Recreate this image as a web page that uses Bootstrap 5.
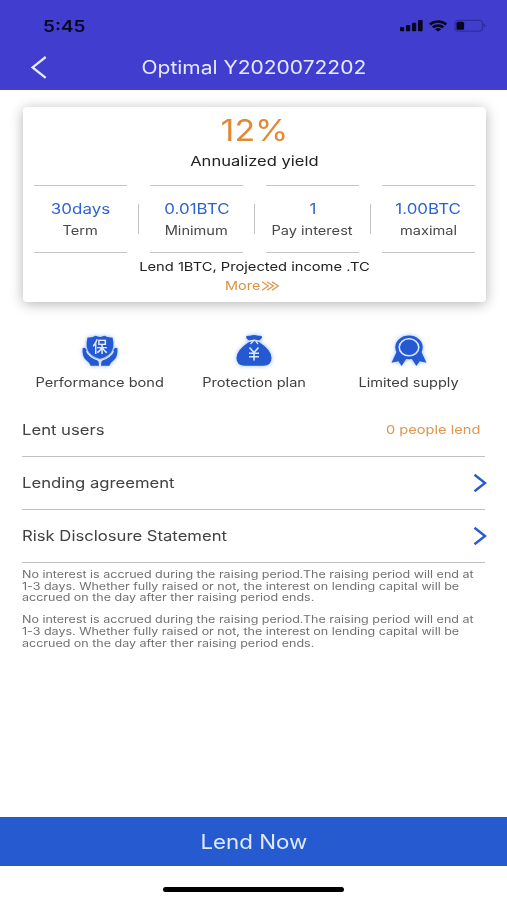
<!DOCTYPE html>
<html lang="en">
<head>
<meta charset="utf-8">
<meta name="viewport" content="width=device-width, initial-scale=1">
<title>Optimal Y2020072202</title>
<link href="https://cdn.jsdelivr.net/npm/bootstrap@5.3.0/dist/css/bootstrap.min.css" rel="stylesheet">
<style>
  body { font-family: Inter, "Noto Sans", sans-serif; color: #424242; background: #fff; }
  .screen { height: 900px; overflow: hidden; }
  .top-area { background: #403dcf; height: 89.5px; }
  .status-row { height: 45px; padding: 7px 21px 0 43px; color: #07071f; }
  .title-row { height: 44.5px; color: #e6e9ff; padding: 0 30px; }
  .title-row .side { width: 20px; }

  /* extended letterforms: each text block widens from its own anchor */
  .wide { display: inline-block; white-space: nowrap; transform: scaleX(var(--sx, 1.18)); transform-origin: 50% 50%; }
  .wide-start { transform-origin: 0 50%; }
  .wide-end { transform-origin: 100% 50%; }

  .t-clock { font-size: 15.5px; font-weight: 600; --sx: 1.22; padding-top: 1px; }
  .t-title { font-size: 18.3px; --sx: 1.148; }
  .t-rate { font-size: 29.5px; --sx: 1.15; color: #e08a35; }
  .t-yield { font-size: 13.5px; --sx: 1.225; color: #222; }
  .t-value { font-size: 14px; --sx: 1.21; color: #2d62d2; }
  .t-label { font-size: 12.6px; --sx: 1.16; color: #484848; }
  .t-note { font-size: 12.3px; --sx: 1.195; color: #222; }
  .t-more { font-size: 12px; --sx: 1.2; color: #e0903f; }
  .t-feature { font-size: 12.4px; --sx: 1.175; color: #404040; }
  .t-row { font-size: 14.3px; --sx: 1.165; color: #424242; }
  .t-count { font-size: 12px; --sx: 1.22; color: #e0964c; }
  .t-fine { font-size: 10.4px; --sx: 1.203; color: #707070; line-height: 11.9px; }
  .t-cta { font-size: 20px; --sx: 1.115; color: #dfeaff; padding-top: 2px; }

  .offer { margin: 17.5px 21px 0 22.5px; height: 194.5px; border-radius: 4px; box-shadow: 0 2px 13px rgba(0,0,0,.3); }
  .rate-line { height: 45px; line-height: 46px; }
  .yield-line { height: 18px; line-height: 17px; }
  .stats { margin-top: 15px; padding-left: 11.5px; height: 67.5px; }
  .stat { width: 93px; border-top: 1px solid #c4c4c4; border-bottom: 1px solid #c4c4c4; padding-top: 13px; }
  .stat-value { height: 18px; line-height: 18px; }
  .stat-label { height: 20px; line-height: 20px; margin-top: 2px; }
  .stat-rule { width: 1px; height: 30px; margin: 0 11px; background: #c4c4c4; }
  .note-line { height: 20px; line-height: 20px; margin-top: 2.5px; }
  .more-line { height: 18px; margin-top: 1.5px; }

  .features { margin: 30px 21px 0 22.5px; height: 76px; }
  .features svg { display: block; height: 38px; filter: drop-shadow(0 0 2px rgba(60,125,255,.55)); }
  .feature-name { height: 20px; line-height: 20px; margin-top: 1px; }

  .options { margin: 0 22.5px 0 21.5px; }
  .option { height: 53.3px; border-bottom: 1px solid #c0c0c0; padding-left: .5px; }
  .option:first-child { height: 49px; padding-right: 4px; padding-bottom: 3px; }
  .option svg { margin-right: -2px; }
  .fine-print { padding: 5.5px 0 0 22px; }
  .fine-print p { margin: 0 0 9.4px; }

  .cta { height: 49.5px; background: #265ad0; border: 0; border-radius: 0; margin-top: auto; }
  .home-area { height: 34px; padding-top: 21px; }
  .home-bar { width: 181px; height: 5px; border-radius: 3px; background: #000; }
</style>
</head>
<body>
<div class="screen d-flex flex-column">
  <header class="top-area">
    <div class="status-row d-flex align-items-center justify-content-between">
      <span class="wide wide-start t-clock">5:45</span>
      <svg width="88" height="14" viewBox="0 0 88 14" fill="#06061c">
        <rect x="2" y="8" width="4.2" height="4.2" rx="1"/>
        <rect x="8" y="6" width="4.2" height="6.2" rx="1"/>
        <rect x="14" y="3.7" width="4.2" height="8.5" rx="1"/>
        <rect x="20" y="1" width="4.6" height="11.2" rx="1"/>
        <path d="M31 4.6C36 .1 44 .1 49.2 4.6L47.4 6.4C43 2.8 37.2 2.8 32.8 6.4Z"/>
        <path d="M34 7.5C37.5 4.6 42.7 4.6 46.2 7.5L44.3 9.2C41.6 7.2 38.6 7.2 35.9 9.2Z"/>
        <path d="M37 10.2Q40.1 8 43.2 10.2L40.1 12.6Z"/>
        <rect x="57" y="1.3" width="27.5" height="10.8" rx="3" fill="none" stroke="#302e9e" stroke-width="1.2"/>
        <rect x="58.5" y="2.7" width="7.6" height="8" rx="1.5"/>
        <path d="M85.5 4.6Q90 6.6 85.5 8.8Z" fill="#302e9e"/>
      </svg>
    </div>
    <div class="title-row d-flex align-items-center justify-content-between">
      <svg class="side" width="20" height="24" viewBox="0 0 20 24" fill="none" stroke="#e6e9ff" stroke-width="2.3"><path d="M15.7 2L2.6 12.4L15.7 22.8"/></svg>
      <span class="wide t-title">Optimal Y2020072202</span>
      <span class="side"></span>
    </div>
  </header>

  <section class="offer bg-white text-center">
    <div class="rate-line"><span class="wide t-rate">12%</span></div>
    <div class="yield-line"><span class="wide t-yield">Annualized yield</span></div>
    <div class="stats d-flex align-items-center">
      <div class="stat h-100 flex-shrink-0"><div class="stat-value"><span class="wide t-value">30days</span></div><div class="stat-label"><span class="wide t-label">Term</span></div></div>
      <div class="stat-rule flex-shrink-0"></div>
      <div class="stat h-100 flex-shrink-0"><div class="stat-value"><span class="wide t-value">0.01BTC</span></div><div class="stat-label"><span class="wide t-label">Minimum</span></div></div>
      <div class="stat-rule flex-shrink-0"></div>
      <div class="stat h-100 flex-shrink-0"><div class="stat-value"><span class="wide t-value">1</span></div><div class="stat-label"><span class="wide t-label">Pay interest</span></div></div>
      <div class="stat-rule flex-shrink-0"></div>
      <div class="stat h-100 flex-shrink-0"><div class="stat-value"><span class="wide t-value">1.00BTC</span></div><div class="stat-label"><span class="wide t-label">maximal</span></div></div>
    </div>
    <div class="note-line"><span class="wide t-note">Lend 1BTC, Projected income .TC</span></div>
    <div class="more-line d-flex align-items-center justify-content-center">
      <span class="wide t-more me-1">More</span>
      <svg width="20" height="10" viewBox="0 0 20 10" fill="none" stroke="#e0903f" stroke-width="1.1"><path d="M1 .8L7.4 5L1 9.2M6 .8L12.4 5L6 9.2M11 .8L17.4 5L11 9.2"/></svg>
    </div>
  </section>

  <section class="features row gx-0 text-center">
    <div class="col">
      <svg class="mx-auto" width="44" viewBox="0 0 44 38" fill="#2559d1">
        <path d="M9.5 5.5Q14.5 6 17.5 3.8Q22 6 26.5 3.8Q29.5 6 34.5 5.5Q37 15 33 20.4Q29 24.800 22 26.8Q15 24.8 11 20.4Q7 15 9.5 5.5Z"/>
        <path d="M4.5 16.5Q7 14.5 8.5 18L10.5 22.3L17.8 26.6Q21 28.7 21 33.8H12.6Q11.6 30.6 7.5 27.5Q4.2 24.8 4.5 16.5Z"/>
        <path d="M39.5 16.5Q37 14.5 35.5 18L33.5 22.3L26.2 26.6Q23 28.7 23 33.8H31.4Q32.4 30.6 36.5 27.5Q39.8 24.8 39.5 16.5Z"/>
        <path d="M8.5 19Q11 25 21 28.5M35.5 19Q33 25 23 28.5M22 28V34" fill="none" stroke="#e3edff" stroke-width="1.3"/>
        <text x="22" y="20.3" text-anchor="middle" font-family="Noto Sans CJK SC, sans-serif" font-size="15" font-weight="500" fill="#e4eeff">保</text>
      </svg>
      <div class="feature-name"><span class="wide t-feature">Performance bond</span></div>
    </div>
    <div class="col">
      <svg class="mx-auto" width="44" viewBox="0 0 44 38" fill="#2559d1">
        <path d="M14 5Q14 3.3 18 3.8Q22 2.3 26 3.8Q30.5 3.3 30 5.3Q29.5 7.8 26.5 8.8H17.5Q14.5 7.8 14 5Z"/>
        <path d="M17 10Q22 8.6 27 10Q39.5 18 39.5 26Q39.5 33.8 31 33.8H13Q4.5 33.8 4.5 26Q4.5 18 17 10Z"/>
        <path d="M16.5 9.5Q20 8.7 22 8.2Q25 8.7 27.5 9.5M21.5 8.8L18.5 12M23.5 8.8L26 12" fill="none" stroke="#d5e4ff" stroke-width="1.3"/>
        <path d="M17.5 15.5L22 20.5L26.5 15.5M22 20.5V28.5M17 21.3H27M17 24.8H27" fill="none" stroke="#dce8ff" stroke-width="1.6"/>
      </svg>
      <div class="feature-name"><span class="wide t-feature">Protection plan</span></div>
    </div>
    <div class="col">
      <svg class="mx-auto" width="44" viewBox="0 0 44 38" fill="#2559d1">
        <path d="M9.5 20L4.5 30.7L11.3 29.3L14.7 34L21 24Z"/>
        <path d="M34.5 20L39.5 30.7L32.7 29.3L29.3 34L23 24Z"/>
        <ellipse cx="22" cy="15.3" rx="13.7" ry="11.9"/>
        <ellipse cx="22" cy="15.3" rx="9.8" ry="8.5" fill="none" stroke="#d8e6ff" stroke-width="1.6"/>
      </svg>
      <div class="feature-name"><span class="wide t-feature">Limited supply</span></div>
    </div>
  </section>

  <section class="options">
    <div class="option d-flex align-items-center justify-content-between"><span class="wide wide-start t-row">Lent users</span><span class="wide wide-end t-count">0 people lend</span></div>
    <div class="option d-flex align-items-center justify-content-between"><span class="wide wide-start t-row">Lending agreement</span><svg width="14" height="20" viewBox="0 0 14 20" fill="none" stroke="#275bd0" stroke-width="2.4"><path d="M1.5 1.8L12 10L1.5 18.2"/></svg></div>
    <div class="option d-flex align-items-center justify-content-between"><span class="wide wide-start t-row">Risk Disclosure Statement</span><svg width="14" height="20" viewBox="0 0 14 20" fill="none" stroke="#275bd0" stroke-width="2.4"><path d="M1.5 1.8L12 10L1.5 18.2"/></svg></div>
  </section>

  <section class="fine-print">
    <p class="wide wide-start t-fine d-table">No interest is accrued during the raising period.The raising period will end at<br>1-3 days. Whether fully raised or not, the interest on lending capital will be<br>accrued on the day after ther raising period ends.</p>
    <p class="wide wide-start t-fine d-table">No interest is accrued during the raising period.The raising period will end at<br>1-3 days. Whether fully raised or not, the interest on lending capital will be<br>accrued on the day after ther raising period ends.</p>
  </section>

  <button type="button" class="cta btn w-100 p-0 flex-shrink-0"><span class="wide t-cta">Lend Now</span></button>
  <div class="home-area flex-shrink-0"><div class="home-bar mx-auto"></div></div>
</div>
<script src="https://cdn.jsdelivr.net/npm/bootstrap@5.3.0/dist/js/bootstrap.bundle.min.js"></script>
</body>
</html>
